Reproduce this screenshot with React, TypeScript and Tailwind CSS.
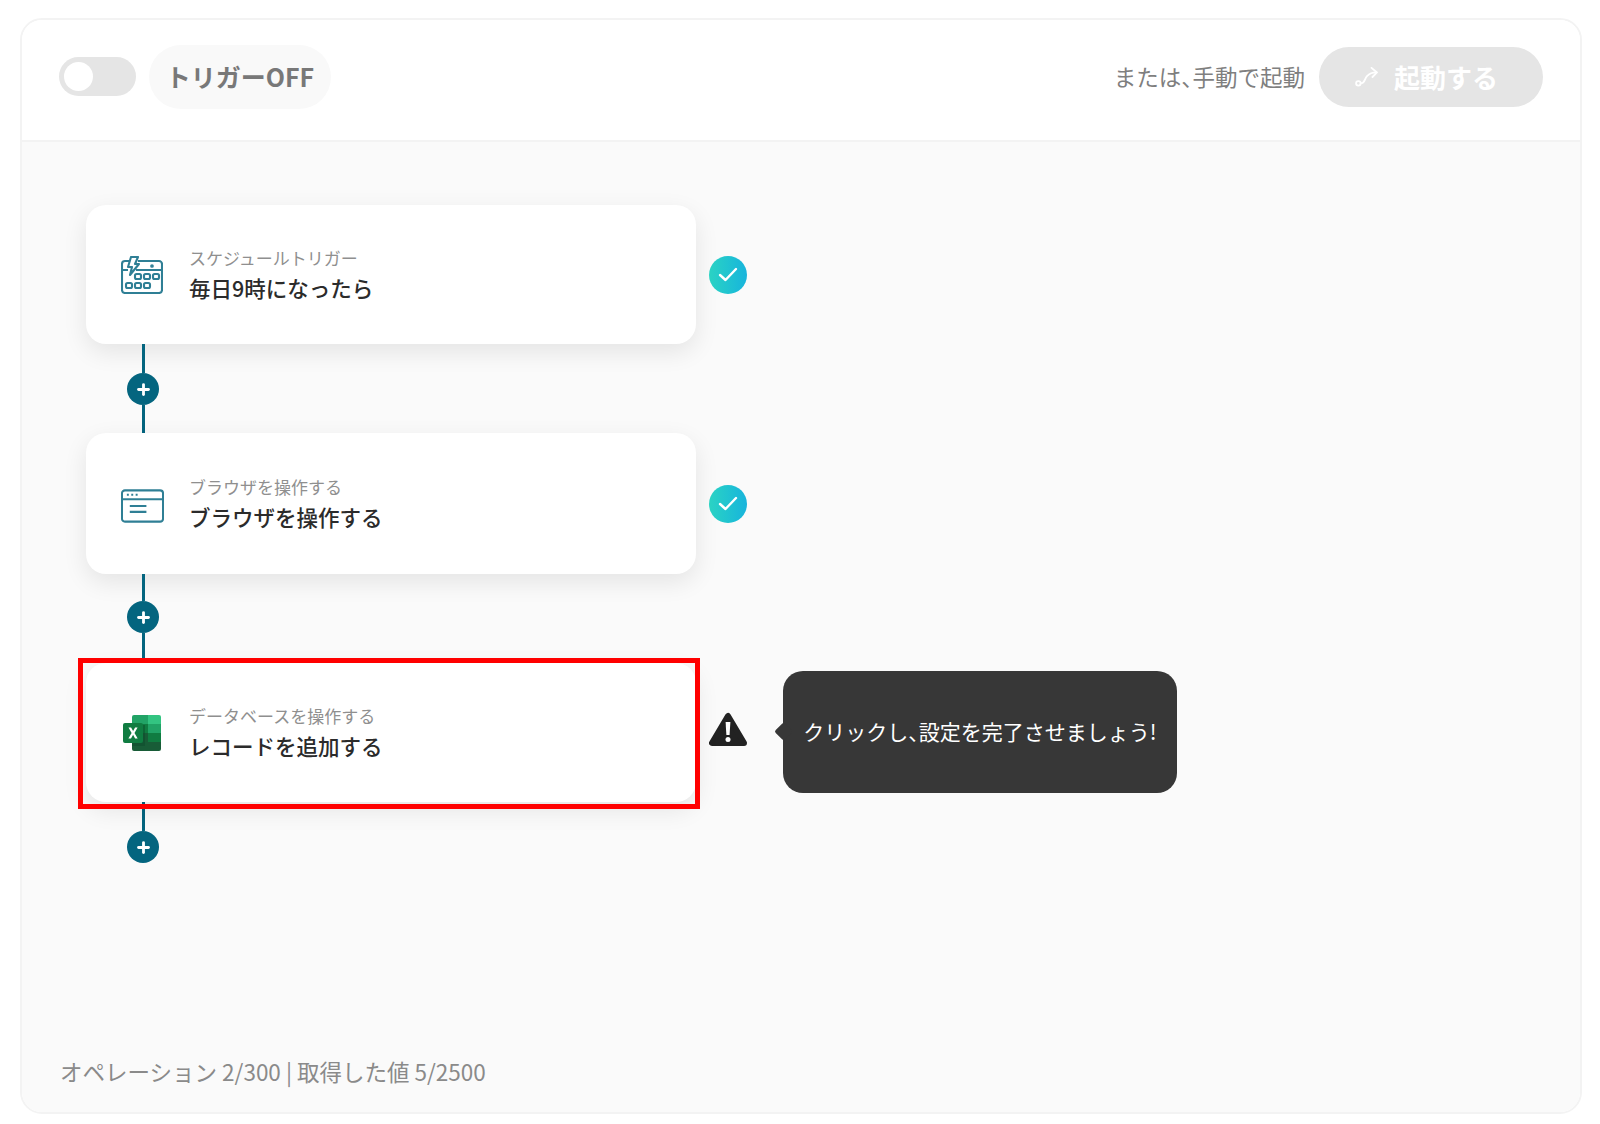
import { Plus } from "lucide-react";

const font = "font-['Noto_Sans_CJK_JP','Noto_Sans',sans-serif]";

function CalendarIcon() {
  return (
    <svg width="42" height="38" viewBox="0 0 42 38" fill="none" stroke="#2f7f95" strokeWidth="2.1">
      <path d="M8 5H4a3 3 0 0 0-3 3v26a3 3 0 0 0 3 3h34a3 3 0 0 0 3-3V8a3 3 0 0 0-3-3H17" />
      <path d="M1 14h6M15 14h26" />
      <path d="M10 1h7l-3 7h4l-9 11 2-8H7z" strokeLinejoin="round" fill="#fff" />
      <circle cx="31" cy="10" r="0.8" fill="#2f7f95" />
      <rect x="14" y="18" width="6" height="5" rx="1.5" />
      <rect x="23" y="18" width="6" height="5" rx="1.5" />
      <rect x="32" y="18" width="6" height="5" rx="1.5" />
      <rect x="5" y="27" width="6" height="5" rx="1.5" />
      <rect x="14" y="27" width="6" height="5" rx="1.5" />
      <rect x="23" y="27" width="6" height="5" rx="1.5" />
    </svg>
  );
}

function BrowserIcon() {
  return (
    <svg className="mt-[4px]" width="43" height="34" viewBox="0 0 44 34" fill="none" stroke="#2f7f95" strokeWidth="2.1">
      <rect x="1" y="1" width="42" height="32" rx="3" />
      <path d="M1 10h42" />
      <path d="M6 5.5h2M10.5 5.5h2M15 5.5h2" strokeWidth="2.2" />
      <path d="M9 17h17M9 23h17" />
    </svg>
  );
}

function ExcelIcon() {
  return (
    <svg width="38" height="36" viewBox="0 0 38 36">
      <path d="M9 2a2 2 0 0 1 2-2h14v9H9z" fill="#21a366" />
      <path d="M25 0h11a2 2 0 0 1 2 2v7H25z" fill="#33c481" />
      <rect x="9" y="9" width="16" height="9" fill="#107c41" />
      <rect x="25" y="9" width="13" height="9" fill="#21a366" />
      <rect x="9" y="18" width="16" height="9" fill="#185c37" />
      <rect x="25" y="18" width="13" height="9" fill="#107c41" />
      <path d="M9 27h29v7a2 2 0 0 1-2 2H11a2 2 0 0 1-2-2z" fill="#185c37" />
      <rect x="9" y="10" width="13" height="21" fill="#0b4a2a" opacity="0.45" />
      <rect x="0" y="8" width="20" height="20" rx="2" fill="#107c41" />
      <path d="M5.5 12.5h2.6l2 3.6 2-3.6h2.5L11.5 18l3.2 5.5h-2.6l-2-3.7-2.1 3.7H5.4L8.6 18z" fill="#fff" />
    </svg>
  );
}

function CheckBadge() {
  return (
    <div className="mt-[1px] flex h-[38px] w-[38px] items-center justify-center rounded-full bg-gradient-to-r from-[#2bd3c3] to-[#18b4dc]">
      <svg width="20" height="16" viewBox="0 0 20 16" fill="none" stroke="#fff" strokeWidth="2.4" strokeLinecap="round" strokeLinejoin="round">
        <path d="M2 8l5.5 5L18 2" />
      </svg>
    </div>
  );
}

function WarningBadge() {
  return (
    <svg className="mb-[6px]" width="38" height="36" viewBox="0 0 38 36">
      <path d="M19 4L3 31h32z" fill="#222" stroke="#222" strokeWidth="6" strokeLinejoin="round" />
      <path d="M16.6 10h4.8l-.8 13h-3.2z" fill="#fff" />
      <circle cx="19" cy="27.5" r="2.5" fill="#fff" />
    </svg>
  );
}

function Connector({ end, top = "h-[29px]" }: { end?: boolean; top?: string }) {
  return (
    <div className={`ml-[41px] flex w-[32px] flex-col items-center ${end ? "h-[62px]" : "h-[89px]"}`}>
      <div className={`w-[3px] bg-[#04657f] ${top}`} />
      <div className="flex h-[32px] w-[32px] shrink-0 items-center justify-center rounded-full bg-[#04657f]">
        <Plus size={17} color="#fff" strokeWidth={4} />
      </div>
      {!end && <div className="w-[3px] flex-1 bg-[#04657f]" />}
    </div>
  );
}

function FlowCard({
  icon,
  label,
  title,
  height,
}: {
  icon: React.ReactNode;
  label: string;
  title: string;
  height: string;
}) {
  return (
    <div className={`flex w-[610px] items-center rounded-[20px] bg-white pl-[34px] shadow-[0_8px_24px_rgba(0,0,0,0.09)] ${height}`}>
      <div className="flex w-[44px] shrink-0 justify-center">{icon}</div>
      <div className="ml-[25px] flex flex-col">
        <span className="text-[17px] leading-[24px] text-[#8f8f8f]">{label}</span>
        <span className="mt-[2px] text-[21.5px] leading-[31px] font-medium text-[#2b2b2b]">{title}</span>
      </div>
    </div>
  );
}

export default function App() {
  return (
    <div className={`h-[1124px] w-[1600px] bg-white pt-[18px] pl-[20px] ${font}`}>
      <div className="flex h-[1096px] w-[1562px] flex-col overflow-hidden rounded-[22px] border-2 border-[#f3f3f3]">
        {/* header */}
        <div className="flex h-[122px] shrink-0 items-center justify-between border-b-2 border-[#f3f3f3] bg-white pr-[37px] pb-[7px] pl-[37px]">
          <div className="flex items-center gap-[13px]">
            <div className="flex h-[39px] w-[77px] items-center rounded-full bg-[#e5e5e5] pl-[5px]">
              <div className="h-[29px] w-[29px] rounded-full bg-white" />
            </div>
            <div className="flex h-[64px] w-[182px] items-center justify-center rounded-full bg-[#f9f9f9] text-[25px] font-bold text-[#787878]">
              トリガーOFF
            </div>
          </div>
          <div className="flex items-center gap-[14px]">
            <span className="text-[22.5px] text-[#7f7f7f]">
              または<span className="[font-feature-settings:'halt']">、</span>手動で起動
            </span>
            <div className="flex h-[60px] w-[224px] items-center justify-center gap-[14px] rounded-full bg-[#e5e5e5] pr-[10px]">
              <svg width="26" height="20" viewBox="0 0 26 22" fill="none" stroke="#fff" strokeWidth="2" strokeLinecap="round" strokeLinejoin="round">
                <circle cx="3.5" cy="18" r="2.5" />
                <path d="M6 18c5 0 4-5 7-8s5-4 10-4" />
                <path d="M18 1l6 5-5 5" />
              </svg>
              <span className="text-[26px] font-bold text-white">起動する</span>
            </div>
          </div>
        </div>

        {/* canvas */}
        <div className="flex flex-1 flex-col justify-between bg-[#fafafa] pt-[63px] pb-[24px] pl-[64px]">
          <div className="flex flex-col">
            <div className="flex items-center gap-[13px]">
              <FlowCard icon={<CalendarIcon />} label="スケジュールトリガー" title="毎日9時になったら" height="h-[139px]" />
              <CheckBadge />
            </div>
            <Connector />
            <div className="flex items-center gap-[13px]">
              <FlowCard icon={<BrowserIcon />} label="ブラウザを操作する" title="ブラウザを操作する" height="h-[141px]" />
              <CheckBadge />
            </div>
            <Connector top="h-[27px]" />
            <div className="flex items-center">
              <div className="relative">
                <FlowCard icon={<ExcelIcon />} label="データベースを操作する" title="レコードを追加する" height="h-[139px]" />
                <div className="absolute top-[-5px] right-[-4px] bottom-[-7px] left-[-8px] border-[5px] border-[#ff0000]" />
              </div>
              <div className="ml-[13px]">
                <WarningBadge />
              </div>
              <div className="relative mb-[2px] ml-[36px] flex h-[122px] w-[394px] items-center justify-center rounded-[20px] bg-[#373737] text-[21px] text-white">
                <div className="absolute top-[54px] left-[-6px] h-[13px] w-[13px] rotate-45 rounded-[2px] bg-[#373737]" />
                クリックし<span className="[font-feature-settings:'halt']">、</span>設定を完了させましょう!
              </div>
            </div>
            <Connector end />
          </div>
          <div className="-ml-[26px] text-[22.5px] leading-[34px] text-[#8a8a8a]">
            オペレーション 2/300 | 取得した値 5/2500
          </div>
        </div>
      </div>
    </div>
  );
}
